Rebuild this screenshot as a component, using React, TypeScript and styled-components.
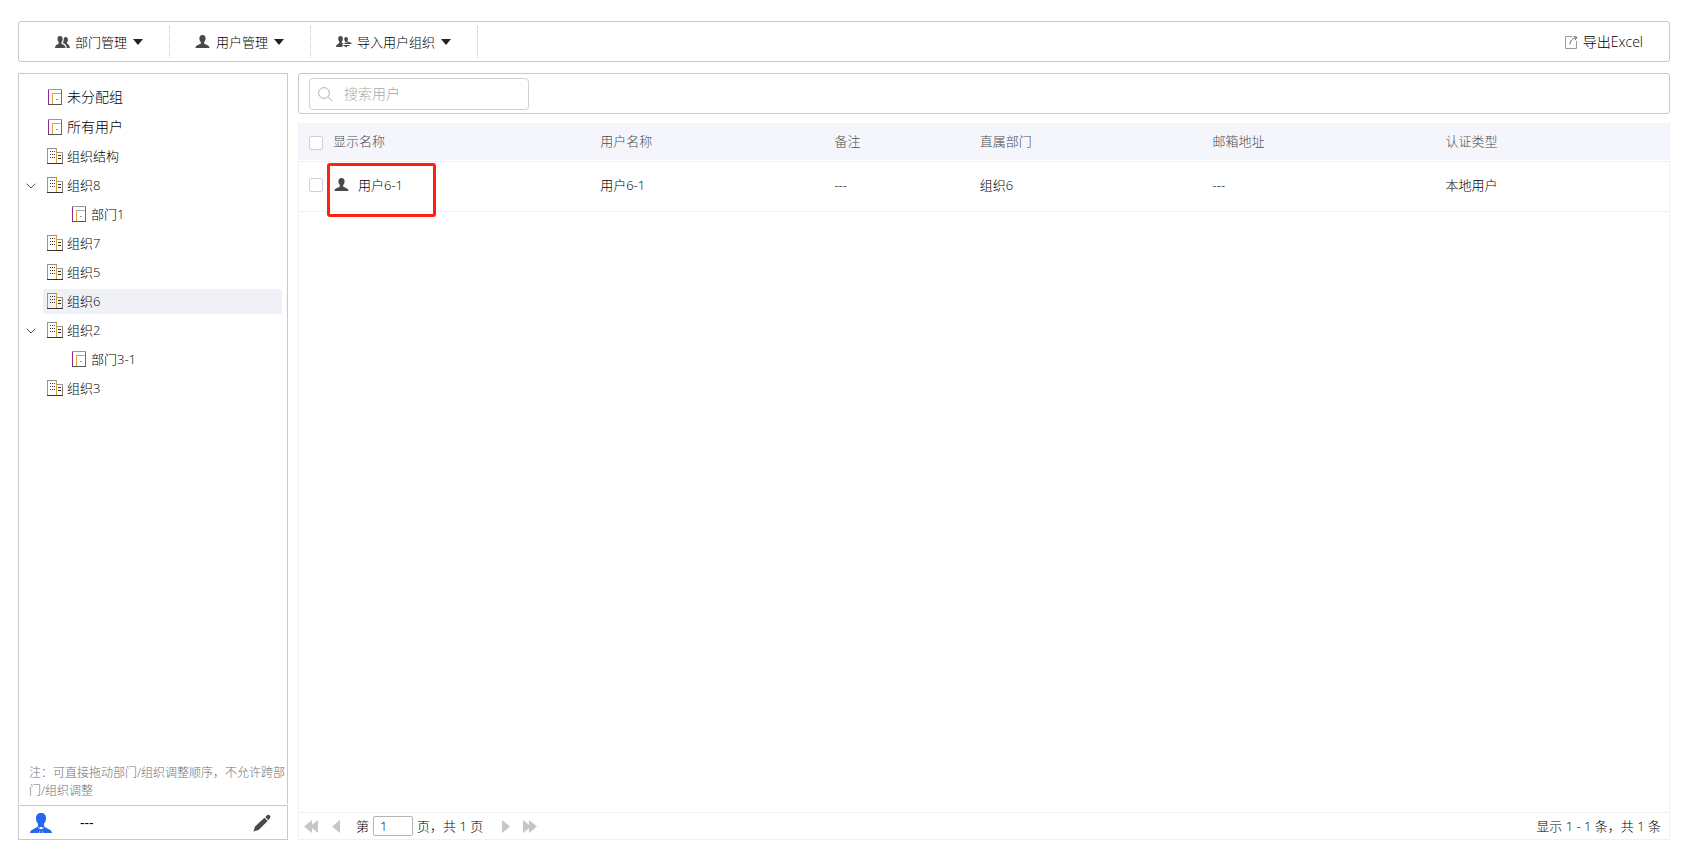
import React from "react";
import styled, { createGlobalStyle } from "styled-components";

const GlobalStyle = createGlobalStyle`
  *, *::before, *::after { box-sizing: border-box; }
  body {
    margin: 0;
    background: #fff;
    color: #000;
    font-family: "Open Sans", "Noto Sans CJK SC", sans-serif;
    font-size: 13px;
    font-weight: 300;
    line-height: 18px;
  }
  button, input { font: inherit; color: inherit; }
  button { border: 0; padding: 0; background: none; cursor: pointer; }
  svg { display: block; flex: none; }
`;

const Page = styled.div`
  display: flex;
  flex-direction: column;
  gap: 11px;
  min-height: 100vh;
  padding: 21px 16px 10px 18px;
`;

const Toolbar = styled.header`
  display: flex;
  align-items: center;
  height: 41px;
  padding: 1px 26px 0 10px;
  border: 1px solid #c9c9c9;
  border-radius: 3px;
`;

const MenuButton = styled.button`
  display: flex;
  align-items: center;
  gap: 5px;
  height: 32px;
  padding: 0 26px 0 25px;
  border-right: 1px dotted #c4c4c4;
  white-space: nowrap;
`;

const Caret = styled.span`
  margin-left: 1px;
  border: 5px solid transparent;
  border-top: 6px solid #222;
  border-bottom: 0;
`;

const ExportButton = styled.button`
  display: flex;
  align-items: center;
  gap: 5px;
  margin-left: auto;
  font-size: 14px;
`;

const Body = styled.div`
  display: flex;
  flex: 1;
  gap: 10px;
`;

const Sidebar = styled.aside`
  display: flex;
  flex: none;
  flex-direction: column;
  gap: 1px;
  width: 270px;
`;

const TreePanel = styled.nav`
  display: flex;
  flex: 1;
  flex-direction: column;
  justify-content: space-between;
  padding: 10px 0 4px;
  border: 1px solid #c9c9c9;
  border-bottom: 0;
`;

const Tree = styled.ul`
  display: flex;
  flex-direction: column;
  gap: 4px;
  margin: 0;
  padding: 0 5px 0 0;
  list-style: none;
`;

const TreeRow = styled.li<{ $depth: number }>`
  display: flex;
  padding-left: ${(p) => p.$depth * 24}px;
`;

const Toggle = styled.button`
  display: flex;
  align-items: center;
  justify-content: center;
  width: 24px;
`;

const ToggleSpace = styled.span`
  width: 24px;
`;

const TreeNode = styled.button<{ $large?: boolean; $selected?: boolean }>`
  display: flex;
  flex: 1;
  align-items: center;
  gap: 4px;
  height: ${(p) => (p.$large ? 26 : 25)}px;
  padding: 0 0 ${(p) => (p.$large ? 0 : 1)}px 4px;
  border-radius: 2px;
  background: ${(p) => (p.$selected ? "#f0f1f7" : "none")};
  font-size: ${(p) => (p.$large ? 14 : 13)}px;
`;

const Note = styled.p`
  margin: 0;
  padding-left: 10px;
  color: #707070;
  font-size: 12px;
`;

const Account = styled.footer`
  display: flex;
  align-items: center;
  height: 35px;
  padding: 0 16px 0 11px;
  border: 1px solid #c9c9c9;
`;

const AccountName = styled.span`
  flex: 1;
  padding-left: 28px;
  font-size: 14px;
  font-weight: 400;
`;

const Main = styled.main`
  display: flex;
  flex: 1;
  flex-direction: column;
  gap: 9px;
  min-width: 0;
`;

const SearchBar = styled.div`
  display: flex;
  height: 41px;
  padding: 4px 10px;
  border: 1px solid #c9c9c9;
  border-radius: 3px;
`;

const SearchBox = styled.label`
  display: flex;
  align-items: center;
  gap: 11px;
  width: 220px;
  height: 32px;
  padding: 0 8px;
  border: 1px solid #cfd0da;
  border-radius: 4px;
`;

const SearchInput = styled.input`
  flex: 1;
  min-width: 0;
  padding: 0;
  border: 0;
  outline: 0;
  background: none;
  font-size: 14px;
  &::placeholder { color: #a8a8a8; opacity: 1; }
`;

const Grid = styled.section`
  display: flex;
  flex: 1;
  flex-direction: column;
  justify-content: space-between;
  border: 1px solid #f1f1f4;
  border-top: 0;
`;

const Table = styled.table`
  width: 100%;
  table-layout: fixed;
  border-collapse: separate;
  border-spacing: 0;
`;

const Col = styled.col<{ $width?: string }>`
  width: ${(p) => p.$width ?? "auto"};
`;

const HeadCell = styled.th`
  height: 39px;
  padding: 0 0 3px 8px;
  border-bottom: 1px solid #f1f1f3;
  background: #f5f6fc;
  box-shadow: inset 0 -1px #fff;
  color: #4c4c4c;
  font-weight: 300;
  text-align: left;
`;

const HeadCheckCell = styled(HeadCell)`
  padding-top: 2px;
  padding-bottom: 0;
`;

const Cell = styled.td`
  position: relative;
  height: 50px;
  padding: 0 0 3px 8px;
  border-bottom: 1px solid #f1f1f3;
`;

const UserName = styled.span`
  display: flex;
  align-items: center;
  gap: 8px;
  padding-left: 1px;
`;

const Highlight = styled.span`
  position: absolute;
  z-index: 1;
  top: 1px;
  left: 2px;
  width: 109px;
  height: 54px;
  border: 3px solid #fc2015;
  border-radius: 3px;
  pointer-events: none;
`;

const Check = styled.input`
  display: block;
  width: 14px;
  height: 14px;
  margin: 0 0 0 2px;
  border: 1px solid #cfd0da;
  border-radius: 2px;
  background: #fff;
  appearance: none;
  &:checked { background: #2468f2; }
`;

const Pager = styled.footer`
  display: flex;
  align-items: center;
  height: 27px;
  padding: 0 8px 0 5px;
  border-top: 1px solid #f1f1f3;
  white-space: nowrap;
`;

const PageLabel = styled.label`
  display: flex;
  align-items: center;
  gap: 4px;
  padding: 0 19px 0 16px;
`;

const PageInput = styled.input`
  width: 40px;
  height: 20px;
  padding: 0 6px;
  border: 1px solid #b5b5b5;
  border-radius: 2px;
`;

const PagerButton = styled.button<{ $gap?: number }>`
  margin-left: ${(p) => p.$gap ?? 0}px;
`;

const Summary = styled.span`
  margin-left: auto;
`;

const PERSON =
  "M7.500 1C5.400 1 4.300 2.500 4.400 4.500C4.400 6 5 7.300 5.800 8V9.600C5 10.800 .7 10.800 .5 14H14.500C14.300 10.800 10 10.800 9.200 9.600V8C10 7.300 10.600 6 10.600 4.500C10.700 2.500 9.600 1 7.500 1Z";

const UserIcon = () => (
  <svg width="16" height="16" viewBox="0 0 16 16" fill="#4a4a4a" aria-hidden="true">
    <path d={PERSON} />
  </svg>
);

const GroupIcon = () => (
  <svg width="16" height="16" viewBox="0 0 16 16" fill="#4a4a4a" aria-hidden="true">
    <path d="M6 2C4.300 2 3.400 3.200 3.500 5C3.500 6.300 4 7.500 4.700 8.200V9.400C4 10.500 1.200 10.200 1 14H11.500C11.300 10.200 8.200 10.500 7.500 9.400V8.200C8.200 7.500 8.700 6.300 8.700 5C8.700 3.200 7.700 2 6 2Z" />
    <path d="M11.800 3C10.800 3 10 3.600 9.800 4.600C9.900 6.400 9.500 7.700 9 8.400V9C10.500 9.800 12.500 10.400 12.700 14H15.800C15.700 10.600 13.700 10.500 13 9.500V8.400C13.600 7.800 13.900 6.800 13.900 5.500C13.900 4 13.100 3 11.800 3Z" />
  </svg>
);

const ImportUsersIcon = () => (
  <svg width="16" height="16" viewBox="0 0 16 16" fill="#4a4a4a" aria-hidden="true">
    <path d="M4.500 2C3 2 2.100 3.200 2.200 4.800C2.200 6 2.700 7 3.300 7.600V8.800C2.700 9.900 .2 10 0 13H6.500V10H7.500V9.500C6.800 9.300 6 9.200 5.800 8.800V7.600C6.500 7 6.900 6 6.900 4.800C6.900 3.200 6 2 4.500 2Z" />
    <path d="M10 3C9 3 8.200 3.800 8.200 5C8.200 6 8.600 6.700 9.100 7.200V8.200H11.300V7.200C11.800 6.700 12 6 12 5C12 3.800 11.100 3 10 3Z" />
    <path d="M11.500 7.200L15.500 9V9.900H8.500V8.800H11.500ZM11 13.500L7.300 11.700V10.900H13.500V12H11Z" />
  </svg>
);

const ExportIcon = () => (
  <svg width="14" height="14" viewBox="0 0 14 14" fill="none" stroke="#9a9a9a" aria-hidden="true">
    <path d="M8 1.500H1.500V13.500H12.500V6" />
    <path d="M6 9.500C6 6 8 3.500 12.500 2.500M9.500 1.500L13 2.300L11 5.200" stroke="#666" />
  </svg>
);

const DoorIcon = () => (
  <svg width="16" height="16" viewBox="0 0 16 16" fill="none" aria-hidden="true">
    <path d="M1 .5H15" stroke="#9a9a9a" />
    <path d="M1.500 1V15" stroke="#92278f" />
    <path d="M14.500 1V15" stroke="#77667c" />
    <path d="M1 15.500H15" stroke="#555" />
    <path d="M5.500 15V4.500" stroke="#e0a23a" />
    <path d="M5 4.500H14" stroke="#aaa" />
    <path d="M9.500 10.500H10.500" stroke="#333" />
  </svg>
);

const BuildingIcon = () => (
  <svg width="16" height="16" viewBox="0 0 16 16" fill="none" aria-hidden="true">
    <path d="M.5 15V1" stroke="#59a9dc" />
    <path d="M0 .5H10" stroke="#8d8d8d" />
    <path d="M9.500 1V15" stroke="#dca03c" />
    <path d="M10 4.500H16" stroke="#999" />
    <path d="M15.500 5V15" stroke="#8a8078" />
    <path d="M0 15.500H16" stroke="#333" />
    <path d="M3 3.500H4M5 3.500H6M7 3.500H8M3 6.500H4M5 6.500H6M7 6.500H8M3 9.500H4M5 9.500H6M7 9.500H8M11 7.500H14M11 10.500H14" stroke="#333" />
  </svg>
);

const ChevronIcon = () => (
  <svg width="10" height="6" viewBox="0 0 10 6" fill="none" stroke="#555" aria-hidden="true">
    <path d="M.7 .7L5 5L9.300 .7" />
  </svg>
);

const SearchIcon = () => (
  <svg width="15" height="15" viewBox="0 0 15 15" fill="none" stroke="#b3b3b3" aria-hidden="true">
    <circle cx="6" cy="6" r="5.400" />
    <path d="M10 10L14.500 14.300" />
  </svg>
);

const AccountIcon = () => (
  <svg width="22" height="20" viewBox="0 0 22 20" aria-hidden="true">
    <path
      fill="#2468f2"
      d="M11 0C7.800 0 5.800 2 6 5.200C6 7.600 6.800 9.600 8 10.600V13C7 15.500 0 16 0 20H22C22 16 15 15.500 14 13V10.600C15.200 9.600 16 7.600 16 5.200C16.200 2 14.200 0 11 0Z"
    />
    <path fill="#fff" d="M10 14H12V16H10ZM9.300 20L10.400 16.500L8.600 20ZM12.700 20L11.600 16.500L13.400 20ZM7.800 13.800L10 15L9.300 16.200ZM14.200 13.800L12 15L12.700 16.200Z" />
  </svg>
);

const PencilIcon = () => (
  <svg width="18" height="18" viewBox="0 0 18 18" fill="#4a4a4a" aria-hidden="true">
    <path d="M.5 17.500L2 12.500L11.500 3.700L14.700 7L5.500 16ZM12.300 3L14.300 1.100C15 .5 15.700 .5 16.300 1.100L17 1.800C17.600 2.500 17.600 3.200 17 3.900L15.400 6.200Z" />
  </svg>
);

const ArrowIcon = ({ double, flip }: { double?: boolean; flip?: boolean }) => (
  <svg width={double ? 14 : 8} height="13" viewBox={double ? "0 0 14 13" : "0 0 8 13"} fill="#c6c6c6" aria-hidden="true">
    <g transform={flip ? `translate(${double ? 14 : 8} 0) scale(-1 1)` : undefined}>
      <path d="M0 6.500L8 0V13Z" />
      {double && <path d="M6 6.500L14 0V13Z" />}
    </g>
  </svg>
);

type Item = {
  label: string;
  kind: "door" | "building";
  depth?: number;
  large?: boolean;
  open?: boolean;
  selected?: boolean;
};

const items: Item[] = [
  { label: "未分配组", kind: "door", large: true },
  { label: "所有用户", kind: "door", large: true },
  { label: "组织结构", kind: "building" },
  { label: "组织8", kind: "building", open: true },
  { label: "部门1", kind: "door", depth: 1 },
  { label: "组织7", kind: "building" },
  { label: "组织5", kind: "building" },
  { label: "组织6", kind: "building", selected: true },
  { label: "组织2", kind: "building", open: true },
  { label: "部门3-1", kind: "door", depth: 1 },
  { label: "组织3", kind: "building" },
];

const menus = [
  { label: "部门管理", icon: <GroupIcon /> },
  { label: "用户管理", icon: <UserIcon /> },
  { label: "导入用户组织", icon: <ImportUsersIcon /> },
];

const headings = ["显示名称", "用户名称", "备注", "直属部门", "邮箱地址", "认证类型"];
const details = ["用户6-1", "---", "组织6", "---", "本地用户"];

export default function App() {
  return (
    <>
      <GlobalStyle />
      <Page lang="zh-CN">
        <Toolbar>
          {menus.map((menu) => (
            <MenuButton key={menu.label} type="button">
              {menu.icon}
              {menu.label}
              <Caret />
            </MenuButton>
          ))}
          <ExportButton type="button">
            <ExportIcon />
            导出Excel
          </ExportButton>
        </Toolbar>
        <Body>
          <Sidebar>
            <TreePanel>
              <Tree>
                {items.map((item) => (
                  <TreeRow key={item.label} $depth={item.depth ?? 0}>
                    {item.open ? (
                      <Toggle type="button" aria-label="收起" aria-expanded="true">
                        <ChevronIcon />
                      </Toggle>
                    ) : (
                      <ToggleSpace />
                    )}
                    <TreeNode type="button" $large={item.large} $selected={item.selected}>
                      {item.kind === "door" ? <DoorIcon /> : <BuildingIcon />}
                      {item.label}
                    </TreeNode>
                  </TreeRow>
                ))}
              </Tree>
              <Note>注：可直接拖动部门/组织调整顺序，不允许跨部门/组织调整</Note>
            </TreePanel>
            <Account>
              <AccountIcon />
              <AccountName>---</AccountName>
              <button type="button" aria-label="编辑">
                <PencilIcon />
              </button>
            </Account>
          </Sidebar>
          <Main>
            <SearchBar>
              <SearchBox>
                <SearchIcon />
                <SearchInput type="text" placeholder="搜索用户" aria-label="搜索用户" />
              </SearchBox>
            </SearchBar>
            <Grid>
              <Table>
                <colgroup>
                  <Col $width="26px" />
                  <Col $width="19.5%" />
                  <Col $width="17.1%" />
                  <Col $width="10.6%" />
                  <Col $width="17%" />
                  <Col $width="17%" />
                  <Col />
                </colgroup>
                <thead>
                  <tr>
                    <HeadCheckCell>
                      <Check type="checkbox" aria-label="全选" />
                    </HeadCheckCell>
                    {headings.map((heading) => (
                      <HeadCell key={heading} scope="col">
                        {heading}
                      </HeadCell>
                    ))}
                  </tr>
                </thead>
                <tbody>
                  <tr>
                    <Cell>
                      <Check type="checkbox" aria-label="选择用户6-1" />
                    </Cell>
                    <Cell>
                      <Highlight />
                      <UserName>
                        <UserIcon />
                        用户6-1
                      </UserName>
                    </Cell>
                    {details.map((text, index) => (
                      <Cell key={index}>{text}</Cell>
                    ))}
                  </tr>
                </tbody>
              </Table>
              <Pager>
                <PagerButton type="button" aria-label="第一页">
                  <ArrowIcon double />
                </PagerButton>
                <PagerButton type="button" aria-label="上一页" $gap={14}>
                  <ArrowIcon />
                </PagerButton>
                <PageLabel>
                  第
                  <PageInput type="text" defaultValue="1" />
                  页，共 1 页
                </PageLabel>
                <PagerButton type="button" aria-label="下一页">
                  <ArrowIcon flip />
                </PagerButton>
                <PagerButton type="button" aria-label="最后一页" $gap={13}>
                  <ArrowIcon double flip />
                </PagerButton>
                <Summary>显示 1 - 1 条，共 1 条</Summary>
              </Pager>
            </Grid>
          </Main>
        </Body>
      </Page>
    </>
  );
}
